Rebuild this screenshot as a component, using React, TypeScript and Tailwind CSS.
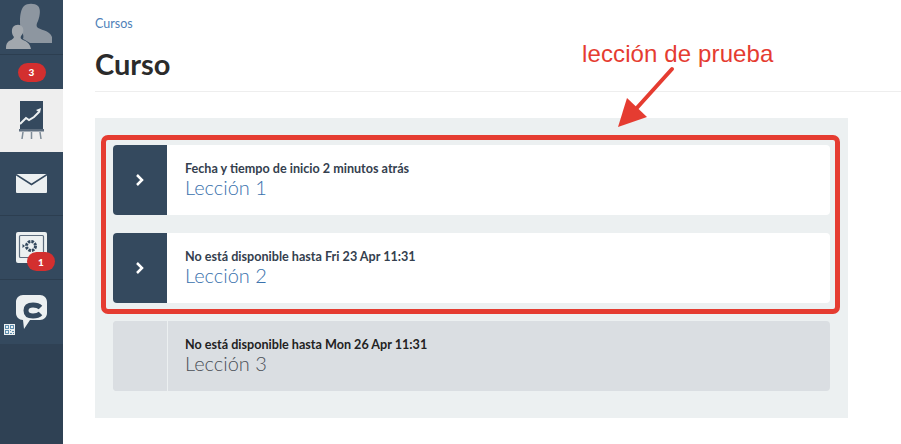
const lessons = [
  { note: 'Fecha y tiempo de inicio 2 minutos atrás', name: 'Lección 1', open: true },
  { note: 'No está disponible hasta Fri 23 Apr 11:31', name: 'Lección 2', open: true },
  { note: 'No está disponible hasta Mon 26 Apr 11:31', name: 'Lección 3', open: false },
];

const Badge = ({ value, className }: { value: string; className: string }) => (
  <span
    className={`flex h-[19px] w-[28px] items-center justify-center rounded-full bg-[#d32f2f] text-[10px] font-black leading-none text-white ${className}`}
  >
    {value}
  </span>
);

const ProfileIcon = () => (
  <svg width="63" height="54" viewBox="0 0 63 54">
    <path
      fill="#8d96a0"
      d="M24 6c3-3 11-3 14 0 3 3 2 10 0 15-1 2-2 4-1 6 2 3 13 3 15 10v6H30c-3-2-5-3-7-4 1-3 0-5-1-7-2-4-2-7-2-11 0-6 1-12 4-15z"
    />
    <path
      fill="#a2a8ae"
      d="M13 27c3-3 8-3 10 1 1 3 0 6-2 8-1 2 0 3 2 4 3 1 7 3 8 9H6c0-3 0-5 2-7 2-2 5-2 6-5-2-2-3-7-1-10z"
    />
  </svg>
);

const ChartIcon = () => (
  <svg width="25" height="39" viewBox="0 0 25 39">
    <rect x="1" y="0" width="23" height="28" fill="#34495e" />
    <path d="M1 23l6-6 3 2 5-3 5-5" fill="none" stroke="#ecf0f1" strokeWidth="2" />
    <path d="M22 7l-5 2 4 3z" fill="#ecf0f1" />
    <rect x="0" y="28" width="25" height="2.500" fill="#5d6d7e" />
    <path d="M4 31l-1 7M12.500 31v7M21 31l1 7" stroke="#7f8c98" strokeWidth="1.500" />
  </svg>
);

const MailIcon = () => (
  <svg width="31" height="19" viewBox="0 0 31 19">
    <rect width="31" height="19" rx="1" fill="#ecf0f1" />
    <path d="M0 0.500l15.500 10L31 0.500" fill="none" stroke="#34495e" strokeWidth="1.500" />
  </svg>
);

const SafeIcon = () => (
  <svg width="31" height="31" viewBox="0 0 31 31">
    <rect width="31" height="31" rx="2" fill="#ecf0f1" />
    <rect x="3.500" y="3.500" width="24" height="22" rx="1" fill="none" stroke="#5d6d7e" strokeWidth="1.200" />
    <circle cx="15" cy="14" r="4.500" fill="none" stroke="#34495e" strokeWidth="3" strokeDasharray="2.500 1" />
    <path d="M6.500 12l2.500 2-2.500 2z" fill="#34495e" />
  </svg>
);

const ChatIcon = () => (
  <svg width="31" height="34" viewBox="0 0 31 34">
    <path
      fill="#ecf0f1"
      d="M7 0h17c4 0 7 3 7 7v11c0 4-3 7-7 7H14l-6 9-1-9c-4 0-7-3-7-7V7c0-4 3-7 7-7z"
    />
    <path
      fill="none"
      stroke="#34495e"
      strokeWidth="5"
      d="M24.500 12.500C22.500 10.500 20 10 17 10 12 10 10 12 10 15.500S12 21 17 21c3 0 5.500-.5 7.500-2.500"
    />
  </svg>
);

const QrIcon = () => (
  <svg width="11" height="11" viewBox="0 0 11 11" className="absolute bottom-[9px] left-[4px]">
    <rect width="11" height="11" fill="#ecf0f1" />
    <path
      fill="#5f8fb0"
      d="M1 1h4v4H1zM6 1h4v4H6zM1 6h4v4H1zM6 6h1v1H6zM8 7h2v1H8zM6 9h2v1H6zM9 9h1v1H9z"
    />
    <path fill="#ecf0f1" d="M2 2h2v2H2zM7 2h2v2H7zM2 7h2v2H2z" />
  </svg>
);

const Sidebar = () => (
  <aside className="flex h-full w-[63px] shrink-0 flex-col bg-[#2f4154]">
    <div className="flex h-[55px] items-start justify-center overflow-hidden border-b border-[#2c3e50] bg-[#34495e]">
      <ProfileIcon />
    </div>
    <div className="flex h-[34px] items-center justify-center bg-[#34495e]">
      <Badge value="3" className="" />
    </div>
    <div className="flex h-[63px] items-center justify-center bg-[#eeeeee]">
      <ChartIcon />
    </div>
    <div className="flex h-[64px] items-center justify-center border-b border-[#2c3e50] bg-[#34495e]">
      <MailIcon />
    </div>
    <div className="relative flex h-[64px] items-center justify-center border-b border-[#2c3e50] bg-[#34495e]">
      <SafeIcon />
      <Badge value="1" className="absolute left-[27px] top-[36px]" />
    </div>
    <div className="relative flex h-[64px] items-center justify-center bg-[#34495e]">
      <ChatIcon />
      <QrIcon />
    </div>
  </aside>
);

const LessonRow = ({ note, name, open }: { note: string; name: string; open: boolean }) => (
  <div
    className={`flex h-[70px] overflow-hidden rounded-[4px] ${open ? 'bg-white' : 'bg-[#dadee2]'}`}
  >
    <div
      className={`flex w-[54px] shrink-0 items-center justify-center ${
        open ? 'bg-[#34495e]' : 'border-r border-[#ecf0f1] box-content bg-[#dadee2]'
      }`}
    >
      {open && (
        <svg width="10" height="14" viewBox="0 0 10 14">
          <path d="M2 2l5 5-5 5" fill="none" stroke="#ffffff" strokeWidth="2.500" />
        </svg>
      )}
    </div>
    <div className={`flex flex-col justify-center pb-[2px] ${open ? 'pl-[18px]' : 'pl-[17px]'}`}>
      <p className={`text-[12.6px] font-bold leading-[16px] ${open ? 'text-[#34404e]' : 'text-[#222222]'}`}>
        {note}
      </p>
      <p className={`text-[20px] font-light leading-[20px] ${open ? 'text-[#3a72ad]' : 'text-[#4a5058]'}`}>
        {name}
      </p>
    </div>
  </div>
);

export default function App() {
  return (
    <div className="relative flex h-[444px] w-[901px] overflow-hidden bg-white font-['Lato',sans-serif]">
      <Sidebar />
      <main className="flex-1 pl-[32px]">
        <p className="pt-[16px] text-[12.5px] leading-[15px] text-[#4f81b8]">Cursos</p>
        <h1 className="mt-[14px] h-[47px] border-b border-[#eeeeee] text-[29px] font-bold leading-[38px] text-[#2b2b2b]">
          Curso
        </h1>
        <section className="mt-[26px] flex h-[300px] w-[753px] flex-col gap-[18px] bg-[#ecf0f1] px-[18px] pt-[27px]">
          {lessons.map((l) => (
            <LessonRow key={l.name} {...l} />
          ))}
        </section>
      </main>

      {/* annotation on top of the screenshot */}
      <div className="absolute left-[101px] top-[135px] h-[179px] w-[739px] rounded-[7px] border-[5px] border-[#e53c31]" />
      <p className="absolute left-[582px] top-[40px] font-['Liberation_Sans',sans-serif] text-[24px] leading-[28px] tracking-[0.12px] text-[#e53c31]">
        lección de prueba
      </p>
      <svg className="absolute left-[615px] top-[65px]" width="60" height="65" viewBox="0 0 60 65">
        <path d="M57 4L20 45" stroke="#e53c31" strokeWidth="4" strokeLinecap="round" fill="none" />
        <path d="M3 62l9-29 20 19z" fill="#e53c31" />
      </svg>
    </div>
  );
}
